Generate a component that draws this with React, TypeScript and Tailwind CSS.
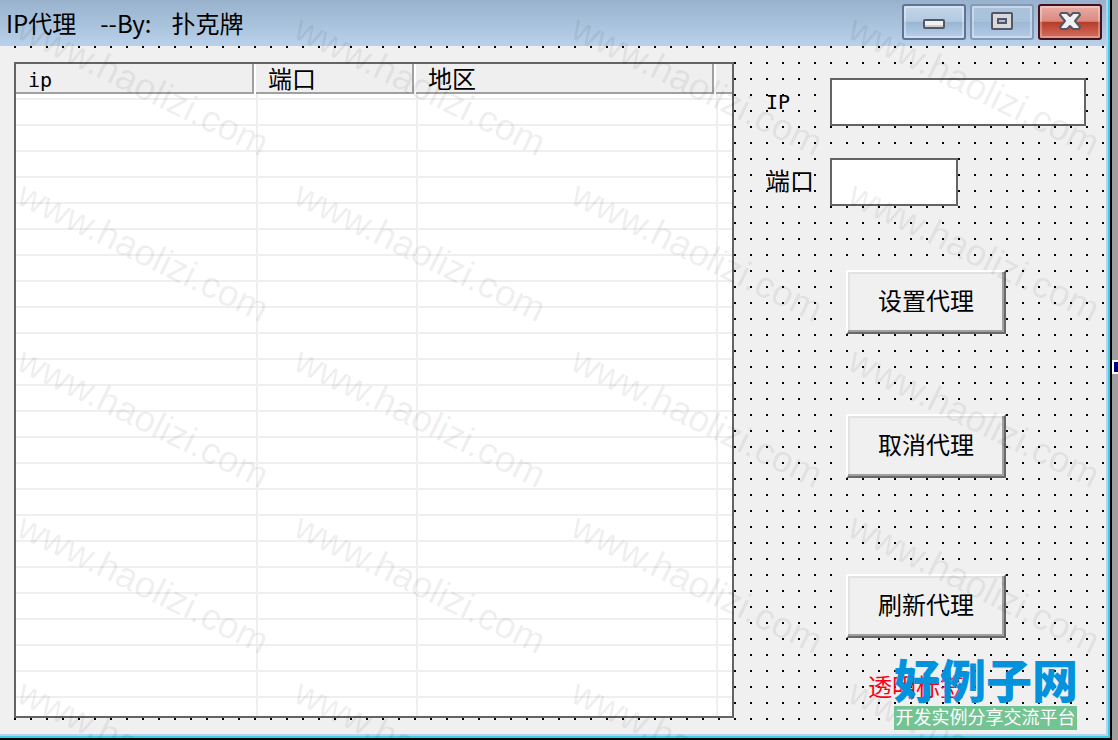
import React from "react";

const COLUMNS = ["ip", "端口", "地区", ""];
const EMPTY_ROWS = 23;
const WATERMARKS = Array.from({ length: 20 }, (_, i) => i);

function BodyRow({ height }: { height: string }) {
  return (
    <tr className={height}>
      {COLUMNS.map((_, i) => (
        <td
          key={i}
          className={`border-[#efefef] p-0 ${height === "h-[18px]" ? "" : "border-b-2"} ${i > 0 ? "border-l-2" : ""}`}
        />
      ))}
    </tr>
  );
}

function ProxyTable() {
  return (
    <table className="w-full table-fixed border-separate border-spacing-0 border-2 border-[#646464] bg-white">
      <colgroup>
        <col className="w-[240px]" />
        <col className="w-[160px]" />
        <col />
        <col className="w-4" />
      </colgroup>
      <thead>
        <tr className="h-[30px]">
          {COLUMNS.map((name, i) => (
            <th key={i} className="p-0 text-left font-normal">
              <div
                className={`flex h-[30px] items-center border-b-2 border-[#a0a0a0] bg-[#efefef] pl-3 text-2xl leading-7 ${
                  i < 3 ? "mr-0.5 border-r-2" : ""
                }`}
              >
                {i === 0 ? (
                  <span className="pt-1 font-['DejaVu_Sans_Mono',monospace] text-xl leading-6">{name}</span>
                ) : (
                  name
                )}
              </div>
            </th>
          ))}
        </tr>
      </thead>
      <tbody>
        <BodyRow height="h-[6px]" />
        {Array.from({ length: EMPTY_ROWS }, (_, i) => (
          <BodyRow key={i} height="h-[26px]" />
        ))}
        <BodyRow height="h-[18px]" />
      </tbody>
    </table>
  );
}

function ActionButton({ children }: { children: React.ReactNode }) {
  return (
    <button
      type="button"
      className="h-16 w-40 border-2 border-t-white border-r-[#696969] border-b-[#696969] border-l-white bg-[#f0f0f0] pb-1 text-2xl shadow-[inset_-2px_-2px_0_#a0a0a0,inset_2px_2px_0_#e3e3e3]"
    >
      {children}
    </button>
  );
}

function TitleBar() {
  const plain =
    "flex h-9 w-16 items-center justify-center rounded-[3px] border-2 shadow-[inset_0_0_0_2px_rgba(255,255,255,0.35)]";
  return (
    <header className="flex h-[46px] items-start bg-linear-to-b from-[#98b2cd] to-[#b9d1ea] pr-1 pl-1.5">
      <h1 className="flex flex-1 text-2xl leading-[46px] whitespace-pre">
        <span>IP代理</span>
        <span className="ml-6">--By:</span>
        <span className="ml-5">扑克牌</span>
      </h1>
      <div className="flex gap-1 pt-1">
        <button
          type="button"
          aria-label="Minimize"
          className={`${plain} border-[#5f7395] bg-[linear-gradient(#c3d5e9,#b4cae2_48%,#98b4d0_50%,#b7d0ea)]`}
        >
          <svg width="22" height="10" viewBox="0 0 22 10" className="mt-1">
            <rect x="1" y="1" width="20" height="8" rx="1" fill="#f2f2f2" stroke="#535666" strokeWidth="2" />
            <rect x="2" y="6" width="18" height="2" fill="#cfcfcf" />
          </svg>
        </button>
        <button
          type="button"
          aria-label="Maximize"
          className={`${plain} border-[#8299b8] bg-[linear-gradient(#abc3dc,#a9c2dc_48%,#9cb8d5_50%,#b3cce6)]`}
        >
          <svg width="22" height="18" viewBox="0 0 22 18" className="-mt-0.5">
            <rect x="1" y="1" width="20" height="16" rx="1" fill="#d9d9d9" stroke="#535666" strokeWidth="2" />
            <rect x="7" y="7" width="8" height="4" fill="#a9c2dc" stroke="#535666" strokeWidth="2" />
          </svg>
        </button>
        <button
          type="button"
          aria-label="Close"
          className="flex h-9 w-16 items-center justify-center rounded-[3px] border-2 border-[#43101c] bg-[linear-gradient(#e9aca4,#d98a80_48%,#b53c27_50%,#d4705f)] shadow-[inset_0_0_0_2px_rgba(255,255,255,0.3)]"
        >
          <svg width="22" height="18" viewBox="0 0 22 18" className="-mt-0.5">
            <path
              d="M2 1H8L11 4L14 1H20L21 3L16 9L21 15L20 17H14L11 14L8 17H2L1 15L6 9L1 3Z"
              fill="#f0f0f0"
              stroke="#535666"
              strokeWidth="2"
              strokeLinejoin="round"
            />
          </svg>
        </button>
      </div>
    </header>
  );
}

export default function App() {
  return (
    <div className="relative flex min-h-screen overflow-hidden font-['Noto_Sans_CJK_SC',sans-serif] text-black">
      <div className="flex flex-1 flex-col border-r-2 border-b-2 border-black">
        <div className="flex flex-1 flex-col border-r-2 border-b-2 border-[#35cfe8]">
          <div className="flex flex-1 flex-col border-r-2 border-b-2 border-[#b9d1ea]">
            <TitleBar />
            <main className="flex flex-1 bg-[#f0f0f0] bg-[conic-gradient(at_2px_2px,transparent_75%,#000_0)] bg-size-[16px_16px] bg-position-[14px_0px] pt-4 pb-4 pl-3.5">
              <div className="flex-1">
                <ProxyTable />
              </div>
              <form className="flex w-[372px] flex-col pt-4 pr-5 pl-8">
                <div className="flex items-center">
                  <label htmlFor="ip" className="w-16 font-['DejaVu_Sans_Mono',monospace] text-xl">
                    IP
                  </label>
                  <input id="ip" type="text" className="h-12 min-w-0 flex-1 border-2 border-[#646464] bg-white px-2 text-2xl" />
                </div>
                <div className="mt-8 flex items-center">
                  <label htmlFor="port" className="w-16 pb-1 text-2xl">
                    端口
                  </label>
                  <input id="port" type="text" className="h-12 w-32 border-2 border-[#646464] bg-white px-2 text-2xl" />
                </div>
                <div className="flex flex-col pt-16 pl-20">
                  <ActionButton>设置代理</ActionButton>
                  <div className="h-20" />
                  <ActionButton>取消代理</ActionButton>
                  <div className="h-24" />
                  <ActionButton>刷新代理</ActionButton>
                </div>
                <p className="mt-8 pl-[102px] text-2xl text-[#fb0016]">透明标签</p>
              </form>
            </main>
          </div>
        </div>
      </div>
      <div className="flex w-1.5 flex-col justify-center bg-[#9f9f9f] pb-1.5">
        <div className="h-3.5 border-2 border-r-0 border-white bg-[#000080]" />
      </div>

      <div
        aria-hidden="true"
        className="pointer-events-none absolute top-2.5 left-1 grid auto-rows-[166px] grid-cols-[repeat(4,277px)] font-['Liberation_Sans',sans-serif] text-[37px] leading-9 text-black/8"
      >
        {WATERMARKS.map((i) => (
          <span key={i} className="ml-6 h-9 origin-top-left rotate-26">
            www.haolizi.com
          </span>
        ))}
      </div>

      <div className="pointer-events-none absolute right-[41px] bottom-2.5 w-[183px]">
        <div className="pb-2 text-[46px] leading-10 font-black whitespace-nowrap text-[#0592dd]">好例子网</div>
        <div className="bg-[#73c492] pb-1 text-center text-lg leading-5 whitespace-nowrap text-white">
          开发实例分享交流平台
        </div>
      </div>
    </div>
  );
}
